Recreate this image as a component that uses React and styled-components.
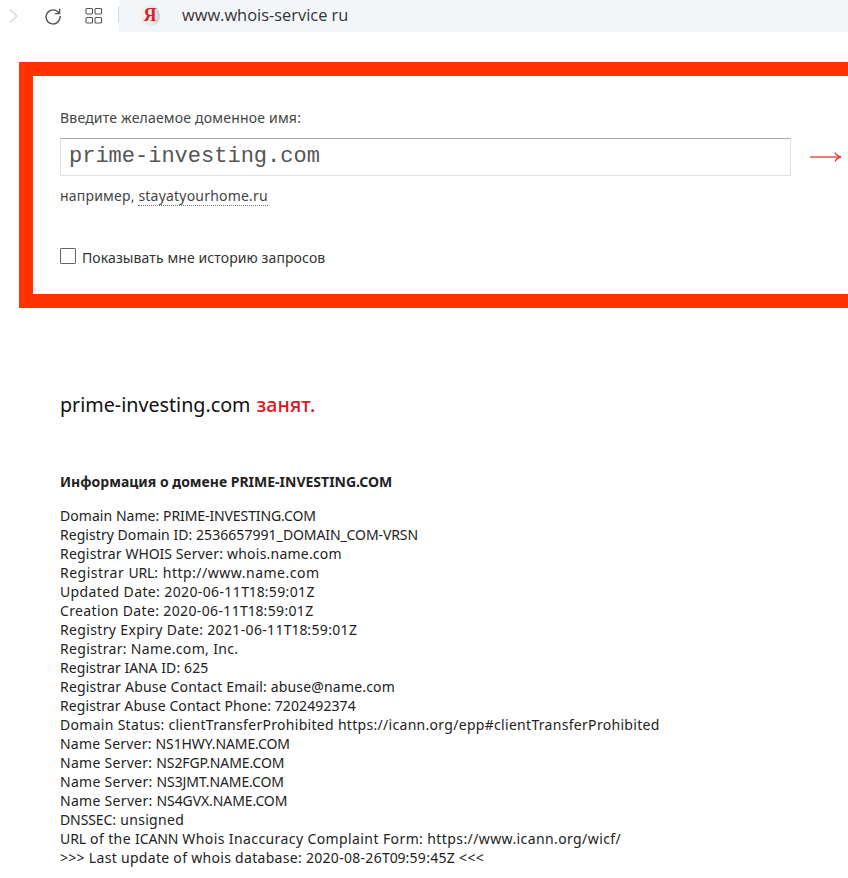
import React from "react";
import styled, { createGlobalStyle } from "styled-components";

const Global = createGlobalStyle`
  html, body { margin: 0; padding: 0; background: #fff; }
  body { font-family: "Noto Sans", sans-serif; color: #222; overflow: hidden; }
`;

const Page = styled.div`
  width: 848px;
  height: 878px;
  overflow: hidden;
`;

const Toolbar = styled.div`
  display: flex;
  align-items: center;
  height: 32px;
`;

const NavGroup = styled.div`
  display: flex;
  align-items: center;
  width: 118px;
  height: 30px;
  padding-left: 8px;
  box-sizing: border-box;
  flex: none;
`;

const NavIcon = styled.svg`
  display: block;
  flex: none;
  margin-left: ${(p) => p.$gap || 0}px;
`;

const Divider = styled.div`
  width: 1px;
  height: 16px;
  margin-top: -2px;
  background: #d5d8da;
  flex: none;
`;

const AddressBar = styled.div`
  flex: 1;
  height: 32px;
  background: #f3f6f9;
  display: flex;
  align-items: center;
  padding-left: 21px;
  padding-bottom: 2px;
  box-sizing: border-box;
`;

const Favicon = styled.div`
  width: 20px;
  height: 21px;
  border-radius: 50% 50% 45% 45%;
  background: linear-gradient(90deg, #f6f0ee 0%, #eceae8 60%, #d0cecc 100%);
  color: #d2232a;
  font: bold 18px/21px "Liberation Serif", serif;
  text-align: center;
  flex: none;
  margin-right: 22px;
`;

const Url = styled.div`
  font: 16.4px/20px "Open Sans", sans-serif;
  color: #333;
`;

const SearchBox = styled.section`
  margin: 30px 0 0 19px;
  height: 246px;
  box-sizing: border-box;
  border: 14px solid #ff3300;
  border-right: 0;
  padding: 33px 0 0 27px;
  display: flex;
  flex-direction: column;
  font-size: 14px;
  letter-spacing: 0.2px;
`;

const FieldLabel = styled.div`
  line-height: 18px;
  color: #444;
`;

const FieldRow = styled.div`
  display: flex;
  align-items: center;
  margin-top: 11px;
`;

const DomainInput = styled.div`
  width: 731px;
  height: 38px;
  box-sizing: border-box;
  border: 1px solid #e0e0e0;
  border-top-color: #aaa;
  padding-left: 8px;
  font: 22px/35px "Liberation Mono", monospace;
  letter-spacing: 0;
  color: #555;
`;

const ArrowIcon = styled.svg`
  display: block;
  margin-left: 19px;
`;

const Example = styled.div`
  margin-top: 11px;
  line-height: 18px;
  color: #444;
`;

const ExampleLink = styled.span`
  border-bottom: 1px dotted #777;
`;

const HistoryRow = styled.label`
  display: flex;
  align-items: center;
  margin-top: 43px;
  letter-spacing: 0.1px;
  color: #333;
`;

const Check = styled.span`
  width: 16px;
  height: 16px;
  box-sizing: border-box;
  border: 1px solid #666;
  border-radius: 1px;
  margin: -3px 6px 0 0;
  flex: none;
`;

const Results = styled.main`
  padding: 85px 0 0 60px;
`;

const Status = styled.h2`
  margin: 0;
  font-size: 19.7px;
  font-weight: normal;
  line-height: 24px;
  color: #111;
`;

const Busy = styled.span`
  color: #e2141e;
  font-weight: 500;
  margin-left: 1px;
`;

const InfoTitle = styled.h3`
  margin: 56px 0 0;
  font-size: 14px;
  font-weight: bold;
  line-height: 18px;
  color: #222;
`;

const WhoisList = styled.div`
  margin-top: 15px;
  font-size: 14px;
  line-height: 19px;
  color: #222;
`;

const WhoisLine = styled.div`
  white-space: pre;
  letter-spacing: ${(p) => p.$track}px;
`;

const Caps = styled.span`
  letter-spacing: -0.1px;
`;

const lines = [
  ["Domain Name: PRIME-INVESTING.COM", 0.05],
  ["Registry Domain ID: 2536657991_DOMAIN_COM-VRSN", 0.05],
  ["Registrar WHOIS Server: whois.name.com", 0.22],
  ["Registrar URL: http://www.name.com", 0.5],
  ["Updated Date: 2020-06-11T18:59:01Z", 0.38],
  ["Creation Date: 2020-06-11T18:59:01Z", 0.36],
  ["Registry Expiry Date: 2021-06-11T18:59:01Z", 0.35],
  ["Registrar: Name.com, Inc.", 0.34],
  ["Registrar IANA ID: 625", 0.12],
  ["Registrar Abuse Contact Email: abuse@name.com", 0.17],
  ["Registrar Abuse Contact Phone: 7202492374", 0.1],
  ["Domain Status: clientTransferProhibited https://icann.org/epp#clientTransferProhibited", 0.3],
  ["Name Server: NS1HWY.NAME.COM", 0.22],
  ["Name Server: NS2FGP.NAME.COM", 0.28],
  ["Name Server: NS3JMT.NAME.COM", 0.3],
  ["Name Server: NS4GVX.NAME.COM", 0.3],
  ["DNSSEC: unsigned", 0.3],
  ["URL of the ICANN Whois Inaccuracy Complaint Form: https://www.icann.org/wicf/", 0.4],
  [">>> Last update of whois database: 2020-08-26T09:59:45Z <<<", 0.3],
];

const capsRun = /([A-Z][A-Z0-9_.\-]{2,})/;

function renderLine(text) {
  return text
    .split(capsRun)
    .map((part, i) => (i % 2 ? <Caps key={i}>{part}</Caps> : part));
}

export default function App() {
  return (
    <Page>
      <Global />
      <Toolbar>
        <NavGroup>
          <NavIcon width="12" height="16" viewBox="0 0 12 16" fill="none" stroke="#d4d4d4" strokeWidth="1.3">
            <path d="M2 1.5 9 8 2 14.5" />
          </NavIcon>
          <NavIcon $gap={24} width="18" height="18" viewBox="0 0 18 18" fill="none" stroke="#555" strokeWidth="1.4">
            <path d="M15 6.2A7 7 0 1 0 16 9" />
            <path d="M15.6 1.8v4.8h-4.8" />
          </NavIcon>
          <NavIcon $gap={23} width="18" height="18" viewBox="0 0 18 18" fill="none" stroke="#555" strokeWidth="1.1">
            <rect x="1" y="1.5" width="6.5" height="5.5" rx="1" />
            <rect x="10" y="1.5" width="6.5" height="5.5" rx="1" />
            <rect x="1" y="10.5" width="6.5" height="5.5" rx="1" />
            <rect x="10" y="10.5" width="6.5" height="5.5" rx="1" />
          </NavIcon>
        </NavGroup>
        <Divider />
        <AddressBar>
          <Favicon>Я</Favicon>
          <Url>www.whois-service ru</Url>
        </AddressBar>
      </Toolbar>
      <SearchBox>
        <FieldLabel>Введите желаемое доменное имя:</FieldLabel>
        <FieldRow>
          <DomainInput>prime-investing.com</DomainInput>
          <ArrowIcon width="32" height="14" viewBox="0 0 32 14" fill="none" stroke="#ee3322" strokeWidth="1.3">
            <path d="M0 7h30" />
            <path d="M25 2.5c1 2.2 3 3.8 6 4.5-3 .7-5 2.3-6 4.5" />
          </ArrowIcon>
        </FieldRow>
        <Example>
          например, <ExampleLink>stayatyourhome.ru</ExampleLink>
        </Example>
        <HistoryRow>
          <Check />
          Показывать мне историю запросов
        </HistoryRow>
      </SearchBox>
      <Results>
        <Status>
          prime-investing.com <Busy>занят.</Busy>
        </Status>
        <InfoTitle>Информация о домене PRIME-INVESTING.COM</InfoTitle>
        <WhoisList>
          {lines.map(([text, track]) => (
            <WhoisLine key={text} $track={track}>
              {renderLine(text)}
            </WhoisLine>
          ))}
        </WhoisList>
      </Results>
    </Page>
  );
}
